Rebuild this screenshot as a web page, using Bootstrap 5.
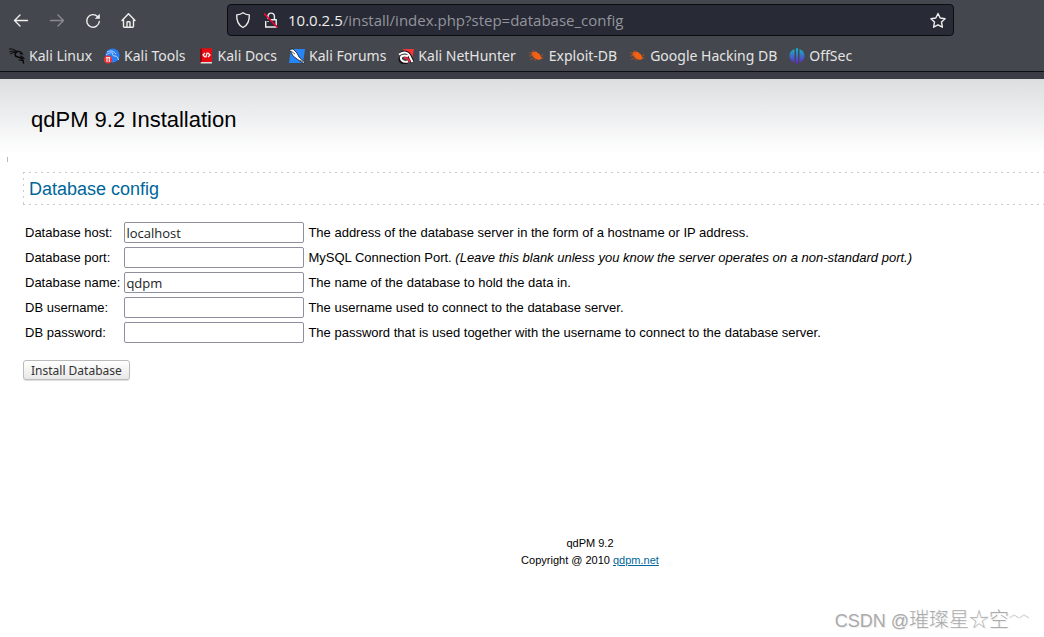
<!DOCTYPE html>
<html lang="en">
<head>
<meta charset="utf-8">
<meta name="viewport" content="width=device-width, initial-scale=1">
<title>qdPM 9.2 Installation</title>
<link href="https://cdn.jsdelivr.net/npm/bootstrap@5.3.0/dist/css/bootstrap.min.css" rel="stylesheet">
<style>
body{font:13px/15px "Liberation Sans",Arial,sans-serif;color:#000;background:#fff;overflow-x:hidden}
svg{display:block;flex:none}
.browser{background:#44474e;border-bottom:1px solid #0c0d10;font-family:"Noto Sans",sans-serif;color:#eeeeec}
.chrome-gap{height:7px;background:#3b3b46}
.tools{height:40px;padding:0 90px 0 12px}
.tool{border:0;background:none;padding:0;color:#eeeeec;width:18px;height:18px}
.tool:disabled{color:#8a8b90}
.nav-tools{gap:18px;width:215px}
.address{height:32px;background:#282a36;border:1px solid #0c0d10;border-radius:4px;padding:0 7px;color:#eeeeec;font:15px/20px "Open Sans","Noto Sans",sans-serif}
.address .path{color:#94959c}
.marks{height:31px;padding:0 9px;gap:12px;font-size:14px;line-height:20px}
.marks a{color:#e4e4e3;gap:4px}
.page-head{height:74px;background:linear-gradient(#dcdee0,#fff);padding:28px 31px}
.page-head h1{font-size:22px;line-height:26px;font-weight:400;margin:0}
.tick{width:1px;height:5px;background:#b9b9b9;margin:4px 0 10px 7px}
.content-area{padding-left:23px}
.section-title{font-size:18px;line-height:21px;font-weight:400;color:#006699;margin:0 0 15px;padding:7px 6px;height:33px;
background:repeating-linear-gradient(90deg,#ccc 0 2px,transparent 2px 6px) 0 0/100% 1px no-repeat,
repeating-linear-gradient(90deg,#ccc 0 2px,transparent 2px 6px) 0 100%/100% 1px no-repeat,
repeating-linear-gradient(#ccc 0 2px,transparent 2px 6px) 0 0/1px 100% no-repeat}
.config-table{border-collapse:separate;border-spacing:0}
.config-table td,.config-table th{padding:2px;font-weight:400;white-space:nowrap;height:25px}
.config-table input{display:block;width:180px;height:21px;border:1px solid #8f8f9d;border-radius:2px;padding:1px 1px 0;font:13px/17px "Open Sans","Noto Sans",sans-serif;color:#222;background:#fff}
.install{display:block;margin-top:15px;height:20px;padding:0 7px;border:1px solid #bbb;border-radius:3px;background:linear-gradient(#fff,#e8e8e8);font:12px/17px "Noto Sans",sans-serif;color:#333;box-shadow:0 1px 1px #ddd}
.page-foot{font-size:11px;line-height:17px;padding:155px 0 0 136px}
.page-foot a{color:#006699}
.watermark{font:300 20px/24px "Noto Sans CJK SC",sans-serif;color:#aaa;text-shadow:1px 1px 0 #eee;padding:38px 15px 0 0}
.watermark .latin{font-family:"Liberation Sans",sans-serif;font-size:18px}
.watermark .peaks{font-size:10px;line-height:10px;vertical-align:10px}
</style>
</head>
<body>
<header class="browser">
<div class="tools d-flex align-items-center">
 <div class="nav-tools d-flex align-items-center">
  <button class="tool" aria-label="Back"><svg width="18" height="18" viewBox="0 0 18 18" fill="none" stroke="currentColor" stroke-width="1.4" stroke-linecap="round" stroke-linejoin="round"><path d="M15.500 9.500H2.500M8 4 2.500 9.500 8 15"/></svg></button>
  <button class="tool" aria-label="Forward" disabled><svg width="18" height="18" viewBox="0 0 18 18" fill="none" stroke="currentColor" stroke-width="1.4" stroke-linecap="round" stroke-linejoin="round"><path d="M2.500 9.500h13M10 4l5.500 5.500L10 15"/></svg></button>
  <button class="tool" aria-label="Reload"><svg width="18" height="18" viewBox="0 0 18 18" fill="none" stroke="currentColor" stroke-width="1.4" stroke-linecap="round"><path d="M13.500 5.500A6.300 6.300 0 1 0 15.300 10.500"/><path d="M15.800 2.800v5h-5z" fill="currentColor" stroke="none"/></svg></button>
  <button class="tool" aria-label="Home"><svg width="18" height="18" viewBox="0 0 18 18" fill="none" stroke="currentColor" stroke-width="1.4" stroke-linecap="round" stroke-linejoin="round"><path d="M2 9.500 8.500 2.700 15 9.500M3.500 8.500v6.700q0 1 1 1h8q1 0 1-1V8.500M7 16v-4.500q0-.7.7-.7h1.600q.7 0 .7.700V16"/></svg></button>
 </div>
 <div class="address d-flex align-items-center flex-grow-1">
  <svg width="17" height="18" viewBox="0 0 17 18" fill="none" stroke="currentColor" stroke-width="1.4" stroke-linejoin="round"><path d="M8 1.700c2 1.500 4 2 6.300 2.200C14.500 9.700 12.500 14.200 8 16.500 3.500 14.200 1.500 9.700 1.700 3.900 4 3.700 6 3.200 8 1.700z"/></svg>
  <svg class="ms-2 me-2" width="20" height="18" viewBox="0 0 20 18" fill="none" stroke="currentColor" stroke-width="1.4"><path d="M8 8V5.300a3.200 3.200 0 0 1 6.400 0V8.500M5.700 10v6h11M10.500 8.700h5.700v5.500M8 10v1"/><path d="M4 2.500 17.500 16.500" stroke="#ff0039"/></svg>
  <span>10.0.2.5<span class="path">/install/index.php?step=database_config</span></span>
  <svg class="ms-auto" width="17" height="17" viewBox="0 0 17 17" fill="none" stroke="currentColor" stroke-width="1.4" stroke-linejoin="round"><path d="m9 1.500 2.200 4.500 4.900.7-3.600 3.400.9 5.100L9 12.800l-4.400 2.400.9-5.100-3.600-3.400 4.900-.7z"/></svg>
 </div>
</div>
<nav class="marks d-flex align-items-center" aria-label="Bookmarks">
 <a href="#" class="d-flex align-items-center text-decoration-none"><svg width="16" height="16" viewBox="0 0 16 16" fill="none" stroke="#080808" stroke-linecap="round"><path d="M.5 1c3-.2 5 .5 7.500 2.500M.8 3.800c3-1 5-.7 7.200-.3M1.500 6C4 4.300 6 4 8.500 4"/><path d="M7 4.500c-2 2.500-.5 4 2 4.500 3.500.6 5.500 2 5.500 6" stroke-width="1.500"/><path d="M8 3.500c2-.5 4-.2 5.500 2.500l-2.500-.5M12 8l3 2.500M10 12l3 .5" stroke-width="1.200"/></svg><span>Kali Linux</span></a>
 <a href="#" class="d-flex align-items-center text-decoration-none"><svg width="16" height="16" viewBox="0 0 16 16"><circle cx="8.500" cy="7.500" r="7" fill="#287df5"/><path d="M3 4c4-2 7-1 9 2M2 7c4-3 6-2 7-2-1 2 0 3 2 3s3 1.500 3.500 4" fill="none" stroke="#b9dcff"/><circle cx="4" cy="11.500" r="4" fill="#ee3136"/><path d="M2 9.700h4.300M3 10v4M5.300 10v4" stroke="#fff" fill="none"/></svg><span>Kali Tools</span></a>
 <a href="#" class="d-flex align-items-center text-decoration-none"><svg width="16" height="16" viewBox="0 0 16 16"><path d="M2 1.500 4 .3h10V15H2z" fill="#e40c12"/><path d="M2 1.200 4 .3V13l-2 2z" fill="#8f0a10"/><path d="M3 14h11v1.500H2.500z" fill="#ddd"/><path d="m7 5-2 2 2 2M10 5l2 2-2 2M9.300 4.500 7.700 9.500" stroke="#fff" fill="none" stroke-width="1.200"/></svg><span>Kali Docs</span></a>
 <a href="#" class="d-flex align-items-center text-decoration-none"><svg width="16" height="16" viewBox="0 0 16 16"><path d="M2 1h14l-2 14H0z" fill="#2686f8"/><path d="M0 1.500 4 1l4 4 2 4 5.500 5-1 1.500L8 11 4 8 2 4z" fill="#fff" stroke="#10151c" stroke-width=".8"/><path d="m2 3 4 3M11 12l3 2" fill="none" stroke="#222" stroke-width=".7"/></svg><span>Kali Forums</span></a>
 <a href="#" class="d-flex align-items-center text-decoration-none"><svg width="16" height="16" viewBox="0 0 16 16"><path d="M5 1h11l-2.500 13L8 8z" fill="#f8323a"/><path d="M2 6.500C6 3.500 10 4 11.500 8l3 6M3 9.500c-2 4 3 6 6 4" fill="none" stroke="#161116" stroke-width="4"/><path d="M1 6.500C6 3.500 10 4 11.500 8l3 6M10 8C4 6.500 1 9 4 12.500c1.500 1.500 4 1.500 6 1" fill="none" stroke="#fff" stroke-width="2"/><path d="M6 10q4-.5 6 4" fill="none" stroke="#e8203b" stroke-width="2"/></svg><span>Kali NetHunter</span></a>
 <a href="#" class="d-flex align-items-center text-decoration-none"><svg width="17" height="16" viewBox="0 0 17 16"><path d="M4 4 8 3.500l4 3 2 4L11 12l-4-1.500L3.500 7z" fill="#f46112"/><path d="M1 5h6M1 8l5-.5M6 4 5 2M14 8l.5-2M13 10h2.500M6 10l-4 1.500M9 11l-3 1.500" stroke="#b85527" stroke-width=".8" fill="none"/></svg><span>Exploit-DB</span></a>
 <a href="#" class="d-flex align-items-center text-decoration-none"><svg width="17" height="16" viewBox="0 0 17 16"><path d="M4 4 8 3.500l4 3 2 4L11 12l-4-1.500L3.500 7z" fill="#f46112"/><path d="M1 5h6M1 8l5-.5M6 4 5 2M14 8l.5-2M13 10h2.500M6 10l-4 1.500M9 11l-3 1.500" stroke="#b85527" stroke-width=".8" fill="none"/></svg><span>Google Hacking DB</span></a>
 <a href="#" class="d-flex align-items-center text-decoration-none"><svg width="16" height="16" viewBox="0 0 16 16"><defs><linearGradient id="os" x2="0" y2="1"><stop stop-color="#11b8c4"/><stop offset="1" stop-color="#6424cf"/></linearGradient></defs><path d="M5.500 1v13.500C2 13 .5 10.500.5 7.700S2 2.500 5.500 1zM7 .3h2v15.400H7zM10.500 1v13.500c3.500-1.500 5-4 5-6.800s-1.500-5.200-5-6.700z" fill="url(#os)"/></svg><span>OffSec</span></a>
</nav>
</header>
<div class="chrome-gap"></div>
<div class="page-head"><h1>qdPM 9.2 Installation</h1></div>
<div class="tick"></div>
<main class="content-area">
<h2 class="section-title">Database config</h2>
<form>
<table class="config-table">
<tr><th scope="row"><label for="host">Database host:</label></th><td><input id="host" type="text" value="localhost"></td><td>The address of the database server in the form of a hostname or IP address.</td></tr>
<tr><th scope="row"><label for="port">Database port:</label></th><td><input id="port" type="text"></td><td>MySQL Connection Port. <i>(Leave this blank unless you know the server operates on a non-standard port.)</i></td></tr>
<tr><th scope="row"><label for="name">Database name:</label></th><td><input id="name" type="text" value="qdpm"></td><td>The name of the database to hold the data in.</td></tr>
<tr><th scope="row"><label for="user">DB username:</label></th><td><input id="user" type="text"></td><td>The username used to connect to the database server.</td></tr>
<tr><th scope="row"><label for="pass">DB password:</label></th><td><input id="pass" type="text"></td><td>The password that is used together with the username to connect to the database server.</td></tr>
</table>
<button class="install" type="button">Install Database</button>
</form>
</main>
<footer class="page-foot text-center">qdPM 9.2<br>Copyright @ 2010 <a href="#">qdpm.net</a></footer>
<div class="watermark text-end"><span class="latin">CSDN @</span>璀璨星☆空<span class="peaks">︿︿</span></div>
<script src="https://cdn.jsdelivr.net/npm/bootstrap@5.3.0/dist/js/bootstrap.bundle.min.js"></script>
</body>
</html>
